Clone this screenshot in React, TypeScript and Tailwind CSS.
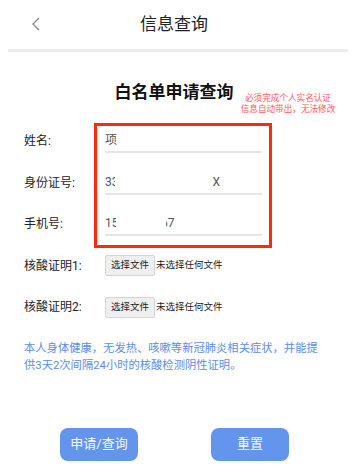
import React from "react";

const font = { fontFamily: 'Roboto, "Noto Sans CJK SC", sans-serif' };

function Field({ label, children }: { label: string; children: React.ReactNode }) {
  return (
    <div className="flex items-center">
      <div className="w-[81px] text-[12px] text-[#222] leading-none">{label}</div>
      <div className="w-[157px] h-[24px] flex items-center border-b-2 border-[#e6e6e6] text-[12px] text-[#555]">
        {children}
      </div>
    </div>
  );
}

function FileRow({ label }: { label: string }) {
  return (
    <div className="flex items-center">
      <div className="w-[81px] text-[12px] text-[#222] leading-none">{label}</div>
      <button className="h-[21px] w-[50px] bg-[#efefef] border border-[#d4d4d4] rounded-[2px] text-[9.5px] text-[#222] flex items-center justify-center">
        选择文件
      </button>
      <span className="ml-[1px] text-[9.5px] text-[#222]">未选择任何文件</span>
    </div>
  );
}

export default function App() {
  return (
    <div className="relative w-[348px] h-[475px] bg-white" style={font}>
      <div className="h-[49px] relative flex items-center justify-center">
        <svg className="absolute left-[31px] top-[17px]" width="10" height="14" viewBox="0 0 10 14">
          <path d="M8 1 L2 7 L8 13" fill="none" stroke="#8a8a8a" strokeWidth="1.4" />
        </svg>
        <span className="text-[17px] text-[#222]">信息查询</span>
      </div>
      <div className="ml-2 h-[3px] bg-[#ececec]" />

      <div className="mt-[29px] h-[24px] flex items-center justify-center text-[17px] font-bold text-[#111]">
        白名单申请查询
      </div>
      <div className="absolute left-[236px] top-[93px] w-[104px] text-center text-[8.6px] leading-[11px] text-[#ff5a5a]">
        <div>必须完成个人实名认证</div>
        <div>信息自动带出，无法修改</div>
      </div>

      <div className="ml-[24px] mt-[24px] flex flex-col gap-[17.5px]">
        <Field label="姓名:">
          <span>项</span>
        </Field>
        <Field label="身份证号:">
          <span className="inline-block w-[9.5px] overflow-hidden whitespace-nowrap">33</span>
          <span className="ml-[98px]">X</span>
        </Field>
        <Field label="手机号:">
          <span className="inline-block w-[10.5px] overflow-hidden whitespace-nowrap">15</span>
          <span className="ml-[50px] inline-flex justify-end w-[9px] overflow-hidden whitespace-nowrap">67</span>
        </Field>
      </div>

      <div className="ml-[24px] mt-[19px] flex flex-col gap-[20.5px]">
        <FileRow label="核酸证明1:" />
        <FileRow label="核酸证明2:" />
      </div>

      <p className="ml-[24px] mt-[22px] w-[300px] text-[11.3px] leading-[17px] text-[#5b8ee8]">
        本人身体健康，无发热、咳嗽等新冠肺炎相关症状，并能提供3天2次间隔24小时的核酸检测阴性证明。
      </p>

      <div className="mt-[54px] flex justify-center gap-[73px] pl-[1px]">
        <button className="w-[78px] h-[33px] rounded-[8px] bg-[#6495ed] text-[#f5f8ff] font-normal text-[13px]">申请/查询</button>
        <button className="w-[78px] h-[33px] rounded-[8px] bg-[#6495ed] text-[#f5f8ff] font-normal text-[13px]">重置</button>
      </div>

      <div className="absolute left-[94px] top-[123px] w-[178px] h-[125px] border-[3px] border-[#ff2a0a] pointer-events-none" />
    </div>
  );
}
